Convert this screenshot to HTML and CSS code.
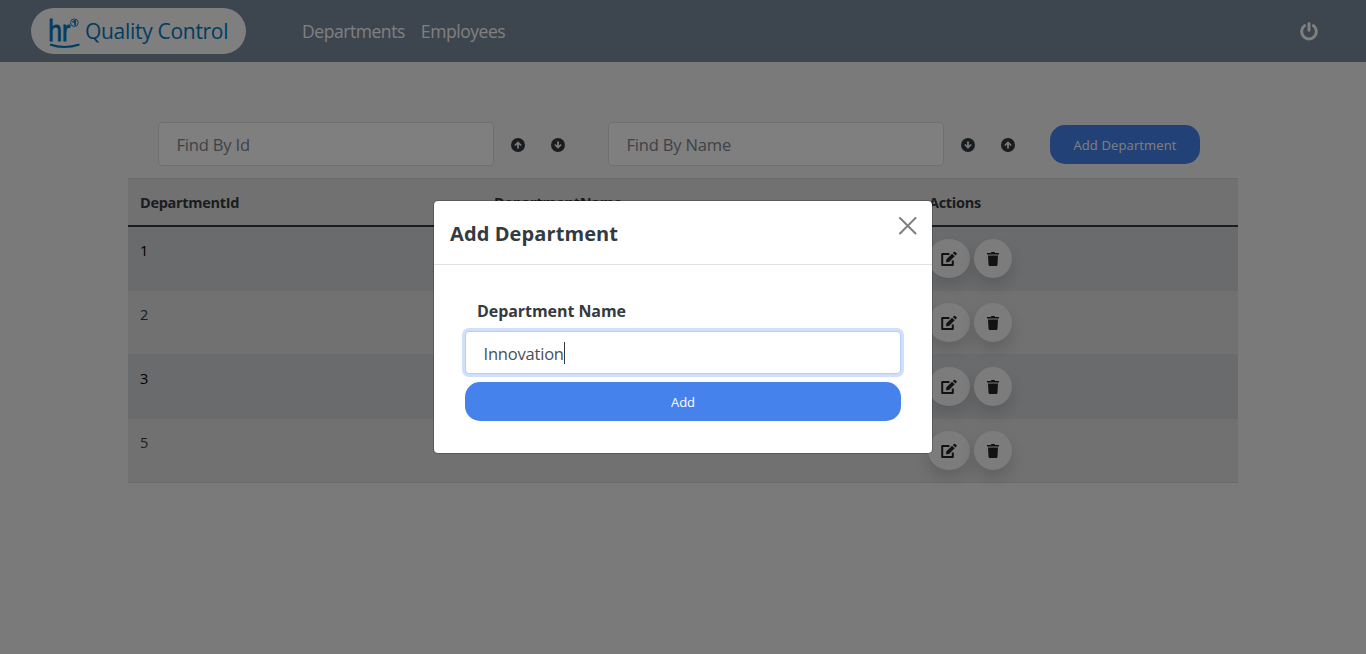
FILE: index.html
```html
<!DOCTYPE html>
<html lang="en">
<head>
<meta charset="utf-8">
<title>Quality Control</title>
<link rel="stylesheet" href="styles.css">
</head>
<body>
<svg class="sprite" width="0" height="0" aria-hidden="true">
  <symbol id="up" viewBox="0 0 16 16"><path fill-rule="evenodd" d="M8 1a7 7 0 1 1 0 14A7 7 0 0 1 8 1zm0 3.200L4.300 7.900l1.100 1.100 1.700-1.600v4h1.800v-4L10.600 9l1.100-1.100z"/></symbol>
  <symbol id="down" viewBox="0 0 16 16"><path fill-rule="evenodd" d="M8 1a7 7 0 1 1 0 14A7 7 0 0 1 8 1zm0 10.800 3.700-3.700-1.100-1.100-1.700 1.600v-4H7.100v4L5.400 7 4.300 8.100z"/></symbol>
  <symbol id="edit" viewBox="0 0 18 16"><path d="M9.500 3H2.200v11h10.600V9.500" fill="none" stroke="currentColor" stroke-width="2" stroke-linejoin="round"/><path d="M6 11.300l.4-3 5.700-5.600 2.600 2.600L9 10.900zM12.900 1.900l.9-.9a1.200 1.200 0 0 1 1.600 0l1 1a1.200 1.200 0 0 1 0 1.600l-.9.9z"/></symbol>
  <symbol id="trash" viewBox="0 0 14 16"><path d="M1 2h3.800l.6-1h3.200l.6 1H13v1.600H1zM2 4.500h10l-.5 9.300a1.300 1.300 0 0 1-1.300 1.200H3.800a1.300 1.300 0 0 1-1.300-1.200z"/></symbol>
</svg>
<nav class="navbar">
  <a class="brand">
    <svg class="logo" width="31" height="42" viewBox="0 0 31 42">
      <text class="logo-text" x="-.8" y="31" textLength="22" lengthAdjust="spacingAndGlyphs">hr</text>
      <path d="M1 34.500Q15 39.500 30.500 34.500" fill="none" stroke="currentColor" stroke-width="1.900"/>
      <circle cx="25.300" cy="12.700" r="3.800" fill="none" stroke="currentColor" stroke-width=".9"/>
      <path d="M23.500 12l2.500-1.200v4.800" fill="none" stroke="currentColor" stroke-width="1.700"/>
    </svg>
    <span class="brand-name">Quality Control</span>
  </a>
  <div class="links"><a>Departments</a><a>Employees</a></div>
  <svg class="power" width="20" height="20" viewBox="0 0 20 20" fill="none" stroke="currentColor" stroke-width="3" stroke-linecap="round"><path d="M5.600 4.600a7.400 7.400 0 1 0 8.800 0M10 2.400v6.800"/></svg>
</nav>
<main class="content">
  <div class="filters">
    <input class="field find" placeholder="Find By Id">
    <span class="sort"><svg><use href="#up"/></svg><svg><use href="#down"/></svg></span>
    <input class="field find find-name" placeholder="Find By Name">
    <span class="sort"><svg><use href="#down"/></svg><svg><use href="#up"/></svg></span>
    <button class="btn btn-open">Add Department</button>
  </div>
  <div class="table">
    <div class="row head"><span>DepartmentId</span><span>DepartmentName</span><span>Actions</span></div>
    <div class="row odd"><span>1</span><span></span><span class="actions"><i class="round wide"><svg width="18" height="16"><use href="#edit"/></svg></i><i class="round"><svg width="14" height="16"><use href="#trash"/></svg></i></span></div>
    <div class="row short"><span>2</span><span></span><span class="actions"><i class="round wide"><svg width="18" height="16"><use href="#edit"/></svg></i><i class="round"><svg width="14" height="16"><use href="#trash"/></svg></i></span></div>
    <div class="row odd tall"><span>3</span><span></span><span class="actions"><i class="round wide"><svg width="18" height="16"><use href="#edit"/></svg></i><i class="round"><svg width="14" height="16"><use href="#trash"/></svg></i></span></div>
    <div class="row last"><span>5</span><span></span><span class="actions"><i class="round wide"><svg width="18" height="16"><use href="#edit"/></svg></i><i class="round"><svg width="14" height="16"><use href="#trash"/></svg></i></span></div>
  </div>
</main>
<div class="backdrop">
  <section class="modal">
    <header class="modal-head">
      <h2>Add Department</h2>
      <svg class="close" width="18" height="18" viewBox="0 0 18 18" stroke="currentColor" stroke-width="2" stroke-linecap="round"><path d="M1 1l15.500 15.500M16.500 1L1 16.500"/></svg>
    </header>
    <div class="modal-body">
      <label>Department Name</label>
      <div class="field focused"><span class="value">Innovation</span><span class="caret"></span></div>
      <button class="btn btn-add">Add</button>
    </div>
  </section>
</div>
</body>
</html>
```
FILE: styles.css
```css
* { box-sizing: border-box; }
body { margin: 0; height: 654px; overflow: hidden; background: #f5f5f5; color: #343a40; font-family: "Open Sans", "Noto Sans", sans-serif; font-size: 14.500px; }
.sprite { display: block; }
.navbar { display: flex; align-items: center; height: 62px; padding: 0 47px 0 31px; background: #7b8a9d; color: #fff; }
.brand { display: flex; align-items: center; gap: 6px; width: 215px; height: 46px; padding-left: 18px; border-radius: 23px; background: #fff; color: #007ac2; }
.logo { flex: none; fill: currentColor; }
.logo-text { font: 400 30px "Liberation Sans", sans-serif; stroke: currentColor; stroke-width: .8px; }
.brand-name { font-size: 21px; letter-spacing: -.3px; white-space: nowrap; margin-left: -1px; }
.links { display: flex; gap: 16px; margin-left: 56px; flex: 1; font-size: 17.500px; letter-spacing: -.44px; }
.content { width: 1110px; margin: 60px auto 0; }
.filters { display: flex; align-items: center; height: 44px; padding-left: 30px; }
.field { height: 44px; border: 1px solid #dcdfe3; border-radius: 4px; background: #fff; padding: 0 17.500px; font: 16.500px "Open Sans", sans-serif; color: #495057; }
.find { width: 336px; flex: none; outline: none; }
.find::placeholder { color: #7d858d; opacity: 1; letter-spacing: -.17px; }
.find-name { margin-left: 42px; }
.sort { display: flex; gap: 24px; margin-left: 16px; padding-top: 1px; }
.sort svg { width: 16px; height: 16px; fill: #343a40; }
.btn { border: 0; border-radius: 15px; height: 39px; background: #4582ec; color: #fff; font: 13px "Open Sans", sans-serif; padding: 0; }
.btn-open { width: 150px; margin-left: 34px; padding-top: 1px; letter-spacing: .13px; }
.table { margin-top: 12px; background: #e2e2e2; }
.row { display: grid; grid-template-columns: 354px 435px 1fr; height: 64px; padding-left: 12px; padding-top: 12px; line-height: 23px; }
.odd { background: #d5d7da; color: #000; }
.short { height: 63px; }
.tall { height: 65px; padding-top: 13px; }
.last { border-bottom: 1px solid #d2d4d6; }
.head { height: 49px; border-top: 1px solid #d2d4d6; border-bottom: 2px solid #343a40; font-weight: 700; font-size: 14.500px; line-height: 24px; letter-spacing: -.3px; }
.actions { display: flex; gap: 4px; }
.round { display: flex; align-items: center; justify-content: center; width: 38px; height: 39px; border-radius: 50%; background: #f8f8f8; box-shadow: 0 8px 16px rgba(0,0,0,.15); color: #212529; }
.round svg { fill: currentColor; }
.wide { width: 42px; margin-left: -1px; }
.backdrop { position: absolute; inset: 0; background: rgba(0,0,0,.5); display: flex; justify-content: center; align-items: center; }
.modal { width: 500px; height: 254px; background: #fff; background-clip: padding-box; border: 1px solid rgba(0,0,0,.2); border-radius: 5px; }
.modal-head { display: flex; justify-content: space-between; align-items: flex-start; height: 64px; padding: 16px 15px 0 16px; border-bottom: 1px solid #dee2e6; }
.modal-head h2 { margin: 0; font-size: 20px; line-height: 33px; letter-spacing: .1px; }
.close { color: #7f7f7f; }
.modal-body { display: flex; flex-direction: column; padding: 34px 31px 0; }
.modal-body label { padding-left: 12px; font-weight: 700; font-size: 16px; line-height: 24px; margin-bottom: 8px; letter-spacing: -.06px; }
.focused { display: flex; align-items: center; height: 43px; border-color: #b5cdf8; box-shadow: 0 0 0 3px #d0e0fb; }
.value { letter-spacing: -.2px; padding-top: 1px; }
.caret { width: 1px; height: 22px; background: #343a40; }
.btn-add { margin-top: 8px; }
```
